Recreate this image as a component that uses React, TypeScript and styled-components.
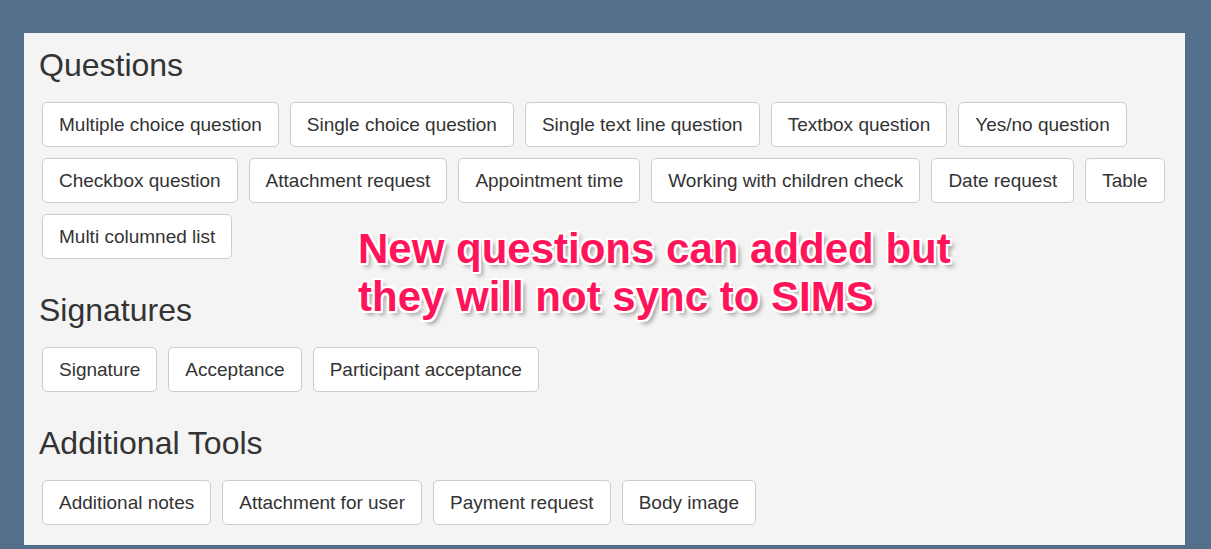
import React from "react";
import styled, { createGlobalStyle } from "styled-components";

const GlobalStyle = createGlobalStyle`
  html, body {
    margin: 0;
    padding: 0;
    background: #546f8b;
  }
  body {
    font-family: "Liberation Sans", Arial, sans-serif;
  }
`;

const Page = styled.div`
  padding: 33px 26px 4px 24px;
  min-height: 549px;
  box-sizing: border-box;
`;

const Panel = styled.div`
  position: relative;
  background: #f4f4f4;
  padding: 14px 15px 20px 15px;
  display: flex;
  flex-direction: column;
  gap: 33px;
`;

const Section = styled.section`
  display: flex;
  flex-direction: column;
`;

const Heading = styled.h2`
  margin: 0 0 19px 0;
  font-family: "Liberation Sans", Arial, sans-serif;
  font-weight: 400;
  font-size: 32px;
  line-height: 36px;
  color: #333333;
`;

const ButtonGroup = styled.div`
  display: flex;
  flex-wrap: wrap;
  gap: 11px;
  margin-left: 3px;
`;

const ToolButton = styled.button`
  font-family: "Liberation Sans", Arial, sans-serif;
  font-size: 19px;
  line-height: 27px;
  color: #333333;
  background: #ffffff;
  border: 1px solid #cccccc;
  border-radius: 5px;
  padding: 8px 16px;
  margin: 0;
  cursor: pointer;
  white-space: nowrap;
`;

const Annotation = styled.div`
  position: absolute;
  left: 334px;
  top: 192px;
  font-family: "Liberation Sans", Arial, sans-serif;
  font-weight: 700;
  font-size: 42px;
  line-height: 48px;
  color: #ff145a;
  white-space: nowrap;
  text-shadow:
    2px 0 0 #fff, -2px 0 0 #fff, 0 2px 0 #fff, 0 -2px 0 #fff,
    2px 2px 0 #fff, -2px -2px 0 #fff, 2px -2px 0 #fff, -2px 2px 0 #fff,
    1px 1px 0 #fff, -1px -1px 0 #fff,
    4px 4px 4px rgba(0, 0, 0, 0.35);
  pointer-events: none;
`;

const sections: { title: string; items: string[] }[] = [
  {
    title: "Questions",
    items: [
      "Multiple choice question",
      "Single choice question",
      "Single text line question",
      "Textbox question",
      "Yes/no question",
      "Checkbox question",
      "Attachment request",
      "Appointment time",
      "Working with children check",
      "Date request",
      "Table",
      "Multi columned list",
    ],
  },
  {
    title: "Signatures",
    items: ["Signature", "Acceptance", "Participant acceptance"],
  },
  {
    title: "Additional Tools",
    items: ["Additional notes", "Attachment for user", "Payment request", "Body image"],
  },
];

export default function App() {
  return (
    <>
      <GlobalStyle />
      <Page>
        <Panel>
          {sections.map((s) => (
            <Section key={s.title}>
              <Heading>{s.title}</Heading>
              <ButtonGroup>
                {s.items.map((it) => (
                  <ToolButton key={it} type="button">
                    {it}
                  </ToolButton>
                ))}
              </ButtonGroup>
            </Section>
          ))}
          <Annotation>
            New questions can added but
            <br />
            they will not sync to SIMS
          </Annotation>
        </Panel>
      </Page>
    </>
  );
}
